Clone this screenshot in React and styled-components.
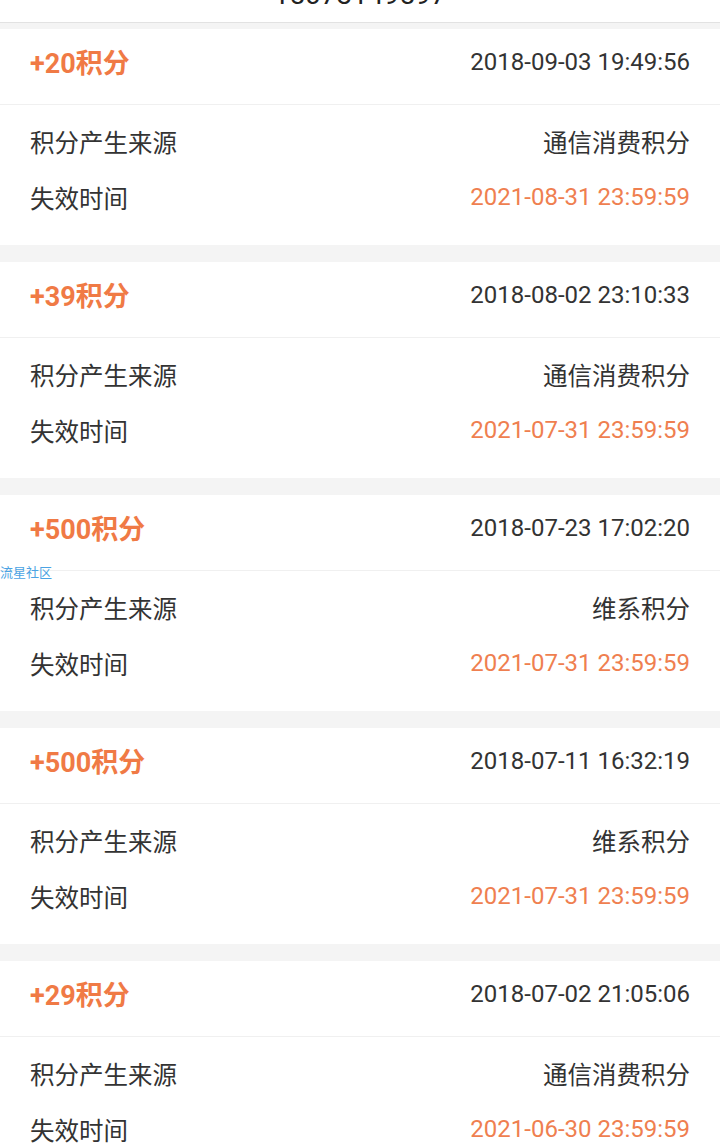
import React from 'react';
import styled, { createGlobalStyle } from 'styled-components';

const GlobalStyle = createGlobalStyle`
  html, body {
    margin: 0;
    padding: 0;
    background: #f4f4f4;
    font-family: Roboto, "Noto Sans CJK SC", "Noto Sans", sans-serif;
    color: #333;
  }
`;

const Page = styled.div`
  position: relative;
  background: #f4f4f4;
  padding-top: 6px;
  min-height: 1148px;
`;

const TopBar = styled.div`
  position: absolute;
  top: 0;
  left: 0;
  right: 0;
  height: 22px;
  overflow: hidden;
  background: #fff;
  border-bottom: 1px solid #e2e2e2;
`;

const Phone = styled.div`
  margin-top: -19px;
  text-align: center;
  font-size: 28px;
  line-height: 28px;
  color: #222;
`;

const Header = styled.div`
  height: 23px;
`;

const Card = styled.section`
  background: #fff;
  margin-bottom: 17px;
`;

const CardHead = styled.div`
  height: 76px;
  box-sizing: border-box;
  padding: 0 30px 10px;
  display: flex;
  align-items: center;
  justify-content: space-between;
  border-bottom: 1px solid #f0f0f0;
`;

const Amount = styled.span`
  font-size: 27px;
  font-weight: 700;
  color: #f07a45;
`;

const Stamp = styled.span`
  font-size: 24px;
  color: #333;
`;

const CardBody = styled.div`
  padding: 8px 30px 20px;
`;

const Row = styled.div`
  height: 56px;
  display: flex;
  align-items: center;
  justify-content: space-between;
  font-size: 24.5px;
`;

const Value = styled.span`
  color: ${p => (p.$accent ? '#ef7f50' : '#333')};
  font-size: ${p => (p.$accent ? '24px' : 'inherit')};
`;

const Watermark = styled.div`
  position: absolute;
  left: 0;
  top: 566px;
  font-size: 13px;
  line-height: 14px;
  color: #4ba3e3;
`;

const records = [
  { pts: 20, at: '2018-09-03 19:49:56', src: '通信消费积分', exp: '2021-08-31 23:59:59' },
  { pts: 39, at: '2018-08-02 23:10:33', src: '通信消费积分', exp: '2021-07-31 23:59:59' },
  { pts: 500, at: '2018-07-23 17:02:20', src: '维系积分', exp: '2021-07-31 23:59:59' },
  { pts: 500, at: '2018-07-11 16:32:19', src: '维系积分', exp: '2021-07-31 23:59:59' },
  { pts: 29, at: '2018-07-02 21:05:06', src: '通信消费积分', exp: '2021-06-30 23:59:59' },
];

export default function App() {
  return (
    <>
      <GlobalStyle />
      <Page>
        <TopBar>
          <Phone>15073149597</Phone>
        </TopBar>
        <Header />
        {records.map((r, i) => (
          <Card key={i}>
            <CardHead>
              <Amount>+{r.pts}积分</Amount>
              <Stamp>{r.at}</Stamp>
            </CardHead>
            <CardBody>
              <Row>
                <span>积分产生来源</span>
                <Value>{r.src}</Value>
              </Row>
              <Row>
                <span>失效时间</span>
                <Value $accent>{r.exp}</Value>
              </Row>
            </CardBody>
          </Card>
        ))}
        <Watermark>流星社区</Watermark>
      </Page>
    </>
  );
}
